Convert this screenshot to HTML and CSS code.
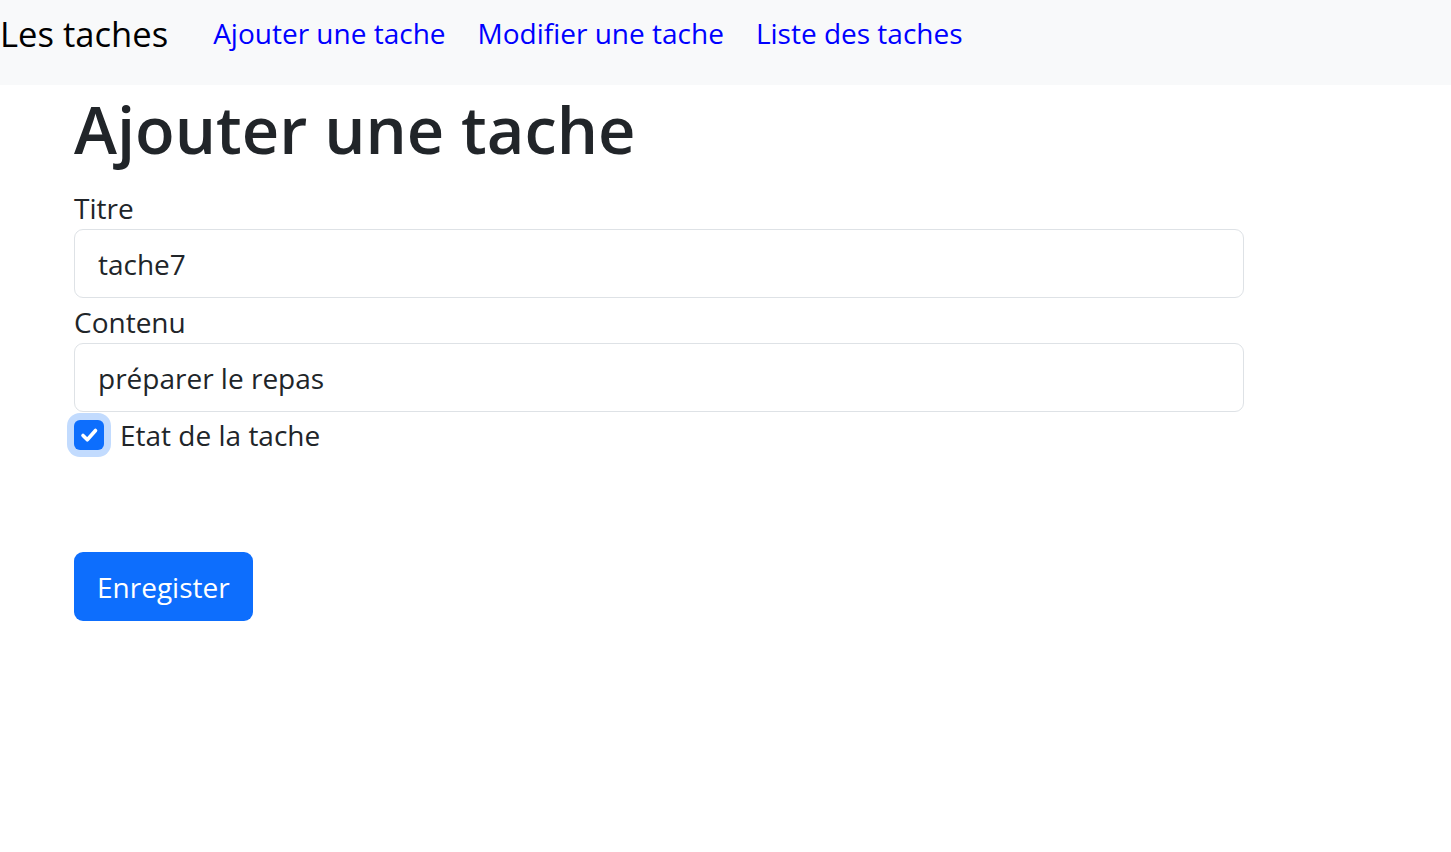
FILE: index.html
```html
<!DOCTYPE html>
<html lang="fr">
<head>
<meta charset="utf-8">
<title>Les taches</title>
<link rel="stylesheet" href="styles.css">
</head>
<body>
<nav class="navbar">
  <a class="brand" href="#">Les taches</a>
  <ul class="nav">
    <li><a class="nav-link" href="#">Ajouter une tache</a></li>
    <li><a class="nav-link" href="#">Modifier une tache</a></li>
    <li><a class="nav-link" href="#">Liste des taches</a></li>
  </ul>
</nav>
<main class="container">
  <h1 class="title">Ajouter une tache</h1>
  <form class="form">
    <label class="label" for="titre">Titre</label>
    <input class="input" id="titre" type="text" value="tache7">
    <label class="label label-gap" for="contenu">Contenu</label>
    <input class="input" id="contenu" type="text" value="préparer le repas">
    <div class="check">
      <span class="check-box">
        <svg viewBox="0 0 30 30" width="30" height="30"><path d="M9 15.5L13.3 19.8L21.5 10.5" fill="none" stroke="#fff" stroke-width="3.6" stroke-linecap="round" stroke-linejoin="round"/></svg>
      </span>
      <label class="check-label">Etat de la tache</label>
    </div>
    <button class="btn" type="button">Enregister</button>
  </form>
</main>
</body>
</html>
```

FILE: styles.css
```css
* { box-sizing: border-box; }
body {
  margin: 0;
  font-family: "Open Sans", "Noto Sans", sans-serif;
  color: #212529;
  background: #fff;
}
.navbar {
  display: flex;
  align-items: flex-start;
  height: 85px;
  background: #f8f9fa;
}
.brand {
  font-size: 34.6px;
  color: #000;
  text-decoration: none;
  margin: 11px 45px 0 0;
  line-height: 45px;
}
.nav {
  display: flex;
  list-style: none;
  margin: 15px 0 0;
  padding: 0;
  gap: 32px;
}
.nav-link {
  font-size: 28px;
  color: #0000ff;
  text-decoration: none;
  line-height: 36px;
}
.container {
  padding: 8px 0 0 74px;
  width: 1244px;
}
.title {
  font-size: 65px;
  font-weight: 600;
  line-height: 72px;
  margin: 0 0 25px;
}
.form { display: flex; flex-direction: column; align-items: flex-start; }
.label {
  display: block;
  font-size: 28px;
  line-height: 36px;
  margin-bottom: 3px;
}
.label-gap { margin-top: 6px; }
.input {
  width: 1170px;
  height: 69px;
  border: 1px solid #dee2e6;
  border-radius: 9px;
  padding: 0 23px;
  font: inherit;
  font-size: 28px;
  color: #212529;
  background: #fff;
}
.check {
  display: flex;
  align-items: center;
  gap: 16px;
  margin-top: 5px;
  height: 36px;
}
.check-box {
  width: 30px;
  height: 30px;
  background: #0d6efd;
  border-radius: 6px;
  display: flex;
  box-shadow: 0 0 0 7px #c2dbfe;
}
.check-label {
  font-size: 28px;
  line-height: 36px;
}
.btn {
  margin-top: 99px;
  height: 69px;
  padding: 0 23px;
  border: none;
  border-radius: 9px;
  background: #0d6efd;
  color: #fff;
  font: inherit;
  font-size: 28px;
  cursor: pointer;
}
```
